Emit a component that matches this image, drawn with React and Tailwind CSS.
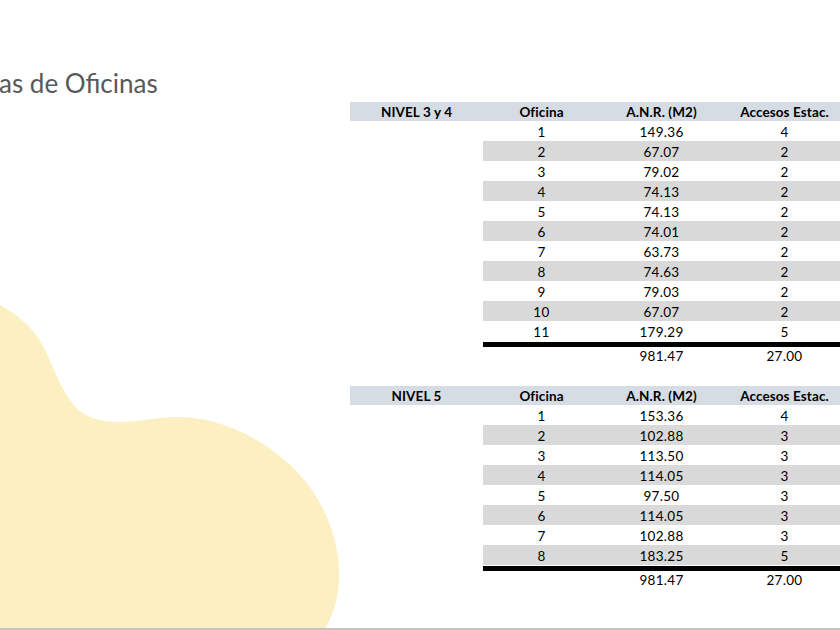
import React from "react";

const t1 = [
  ["1", "149.36", "4"],
  ["2", "67.07", "2"],
  ["3", "79.02", "2"],
  ["4", "74.13", "2"],
  ["5", "74.13", "2"],
  ["6", "74.01", "2"],
  ["7", "63.73", "2"],
  ["8", "74.63", "2"],
  ["9", "79.03", "2"],
  ["10", "67.07", "2"],
  ["11", "179.29", "5"],
];
const t2 = [
  ["1", "153.36", "4"],
  ["2", "102.88", "3"],
  ["3", "113.50", "3"],
  ["4", "114.05", "3"],
  ["5", "97.50", "3"],
  ["6", "114.05", "3"],
  ["7", "102.88", "3"],
  ["8", "183.25", "5"],
];

function Table({ label, rows, total }) {
  return (
    <div className="w-[496px] text-[13.5px] leading-none tracking-[0.3px] text-black">
      <div className="flex h-[19px] items-center bg-[#d6dce4] pt-[3px] font-bold tracking-[0.1px]">
        <div className="w-[133px] text-center">{label}</div>
        <div className="w-[117px] text-center">Oficina</div>
        <div className="w-[123px] text-center">A.N.R. (M2)</div>
        <div className="w-[123px] text-center">Accesos Estac.</div>
      </div>
      <div className="flex">
        <div className="w-[133px]" />
        <div className="flex flex-col">
          {rows.map((r, i) => (
            <div
              key={i}
              className={
                "flex h-[20px] items-center pt-[3px] " +
                (i % 2 === 1 ? "bg-[#d9d9d9]" : "bg-white")
              }
            >
              <div className="w-[117px] text-center">{r[0]}</div>
              <div className="w-[123px] text-center">{r[1]}</div>
              <div className="w-[123px] text-center">{r[2]}</div>
            </div>
          ))}
          <div className="mt-px h-[5px] bg-black" />
          <div className="flex h-[16px] items-center pt-[4px]">
            <div className="w-[117px]" />
            <div className="w-[123px] text-center">{total[0]}</div>
            <div className="w-[123px] text-center">{total[1]}</div>
          </div>
        </div>
      </div>
    </div>
  );
}

export default function App() {
  return (
    <div
      className="relative h-[630px] w-[840px] overflow-hidden bg-white"
      style={{ fontFamily: "Lato, 'Open Sans', sans-serif" }}
    >
      <svg
        className="absolute left-0 top-0"
        width="840"
        height="630"
        viewBox="0 0 840 630"
      >
        <path
          d="M0,305 C20,316 36,330 46,352 C58,378 66,402 84,414 C98,422 115,423 135,421 C150,420 160,417 178,417 C225,417 280,445 312,490 C332,520 340,550 339,580 C338,600 333,614 325,630 L0,630 Z"
          fill="#fcefc1"
        />
      </svg>
      <div className="relative flex h-full flex-col">
        <div className="ml-[-1px] mt-[65px] h-[37px] text-[26px] leading-[36px] text-[#595959]">
          as de Oficinas
        </div>
        <div className="ml-[350px] flex flex-col">
          <Table label="NIVEL 3 y 4" rows={t1} total={["981.47", "27.00"]} />
          <div className="h-[23px]" />
          <Table label="NIVEL 5" rows={t2} total={["981.47", "27.00"]} />
        </div>
        <div className="flex-1" />
        <div className="h-[2px] bg-[#c4c4c4]" />
      </div>
    </div>
  );
}
